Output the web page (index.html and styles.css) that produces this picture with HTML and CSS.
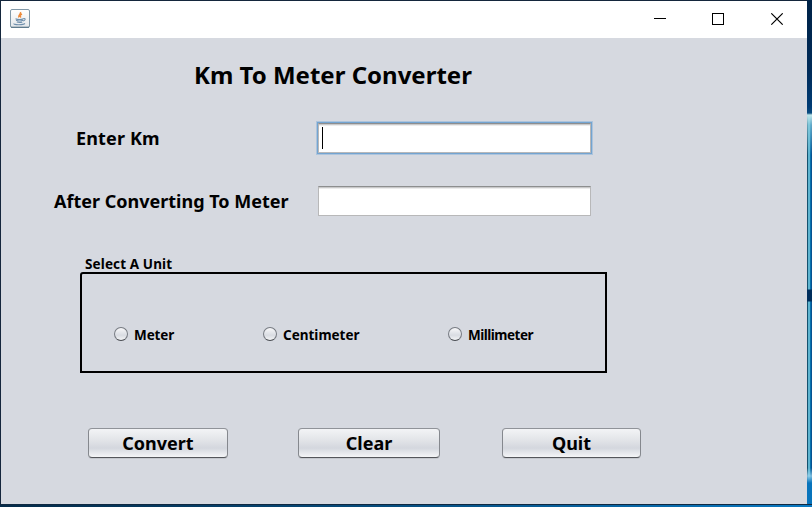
FILE: index.html
```html
<!DOCTYPE html>
<html lang="en">
<head>
<meta charset="utf-8">
<title>Km To Meter Converter</title>
<link rel="stylesheet" href="styles.css">
</head>
<body>
<div class="desktop">
  <main class="window">
    <header class="titlebar">
      <svg class="java" width="20" height="19" viewBox="0 0 20 19">
        <defs><linearGradient id="tile" x2="0" y2="1"><stop stop-color="#fff"/><stop offset="1" stop-color="#e4e7ea"/></linearGradient></defs>
        <rect x=".5" y=".5" width="19" height="18" rx="1.5" fill="url(#tile)" stroke="#8198a8"/>
        <path d="M1 18.2h18" stroke="#526f83"/>
        <path d="M10.500 3c1 2-3 3-1.500 5.500M12 5c-2 1-2.500 2-1 3.500" fill="none" stroke="#ee8b3c" stroke-width="1.500"/>
        <path d="M5.500 9.700c2 .8 6 .8 8 0M6 11.300c2 .8 5 .8 7 0M6.800 13c2 .6 4 .6 5.500 0M13.500 9.500c2.500-.5 2 2-.5 2.500M4 14.500c-1 1.500 9 1.800 11 0" fill="none" stroke="#6f8fac" stroke-width="1.100"/>
      </svg>
      <svg class="controls" width="130" height="12" viewBox="0 0 130 12" fill="none" stroke="#000">
        <path d="M0 5.500h12"/>
        <rect x="58.500" y=".5" width="11" height="11"/>
        <path d="M117.300.3l11.400 11.400M128.700.3l-11.400 11.400" stroke-width="1.100"/>
      </svg>
    </header>
    <h1><span>Km To Meter Converter</span></h1>
    <div class="row"><label class="label enter"><span>Enter Km</span></label><div class="field focused"><i class="caret"></i></div></div>
    <div class="row second"><label class="label after"><span>After Converting To Meter</span></label><div class="field"></div></div>
    <div class="legend"><span>Select A Unit</span></div>
    <section class="units">
      <label class="radio meter"><i></i><span>Meter</span></label>
      <label class="radio centi"><i></i><span>Centimeter</span></label>
      <label class="radio milli"><i></i><span>Millimeter</span></label>
    </section>
    <div class="buttons">
      <button class="convert"><span>Convert</span></button>
      <button class="clear"><span>Clear</span></button>
      <button class="quit"><span>Quit</span></button>
    </div>
  </main>
  <div class="edge"></div>
  <div class="floor"></div>
</div>
</body>
</html>
```

FILE: styles.css
```css
* { box-sizing: border-box; }
body { margin: 0; overflow: hidden; color: #000; font-family: "Noto Sans", sans-serif; font-weight: 700; }
.desktop { display: grid; grid-template: 504px 3px / 807px 5px; width: 812px; height: 507px; background: #14263c; }
.window { border: solid #14263c; border-width: 1px 0 0 1px; background: #d6d9e0; }
.titlebar { display: flex; justify-content: space-between; height: 37px; padding: 8px 23px 0 9px; background: #fff; }
.controls { margin-top: 4px; }
span { display: block; white-space: nowrap; }
h1 { margin: 17px 0 0 193px; font-size: 24px; line-height: 40px; height: 40px; }
.row { display: flex; align-items: center; height: 30px; margin-top: 28px; }
.row.second { margin-top: 33px; }
.label { width: 317px; flex: none; font-size: 18px; line-height: 30px; }
.enter { padding-left: 75px; letter-spacing: .15px; }
.after { padding-left: 53px; }
.field { width: 273px; height: 30px; border: 1px solid #b8b8b9; border-top-color: #8d8e8f; background: linear-gradient(#c9c9ca 0 1px, #ececec 1px 2px, #fff 2px); }
.focused { box-shadow: 0 0 0 1px #73a4d1, 0 0 0 2px #adc4dc; }
.caret { display: block; width: 1px; height: 22px; margin: 3px 0 0 3px; background: #000; }
.legend { height: 18px; margin: 38px 0 0 84px; font-size: 13.5px; line-height: 21px; letter-spacing: .12px; }
.units { display: flex; align-items: center; width: 527px; height: 101px; margin-left: 79px; padding: 23px 0 0 32px; border: 2px solid #000; border-top-left-radius: 3px; }
.radio { display: flex; align-items: center; gap: 6px; font-size: 13.5px; line-height: 18px; }
.radio span { padding-top: 2px; }
.radio i { width: 14px; height: 14px; border: 1px solid #777b82; border-bottom-color: #484b50; border-radius: 50%; background: linear-gradient(#f8f8fa, #d9dce2 60%, #f3f4f6); }
.meter { width: 149px; letter-spacing: -.1px; }
.centi { width: 185px; }
.milli { letter-spacing: -.5px; }
button { height: 30px; padding: 0; border: 1px solid #85888e; border-top-color: #909399; border-bottom-color: #54565b; border-radius: 4px; background: linear-gradient(#f3f4f6, #e2e4e8 40%, #d4d7de 68%, #f4f5f7); box-shadow: 0 1px #c4c7cd; font: 700 18px/28px "Noto Sans", sans-serif; color: #000; }
.buttons { display: flex; margin: 55px 0 0 87px; }
.convert { width: 140px; margin-right: 70px; }
.clear { width: 142px; margin-right: 62px; }
.quit { width: 139px; }
.edge { background: linear-gradient(#002348 0, #002b58 70px, #003c75 107px, #0a4c80 113px, #bfe6ea 115px, #8fd0e0aa 125px, transparent 155px, transparent 289px, #002e5c 290px, #002e5c 301px, transparent 302px, transparent 468px, #9ad4eecc 476px, #0874bc 483px), linear-gradient(90deg, #14516e 0 1px, #5eb4d0 1px 3px, #0872ad 3px 4px, #075291 4px); }
.floor { grid-column: 1 / 3; background: linear-gradient(#102941 0 1px, transparent 1px), linear-gradient(90deg, #052b49, #064b7b 45%, #0875bc 95%, #0978c0); }
```
